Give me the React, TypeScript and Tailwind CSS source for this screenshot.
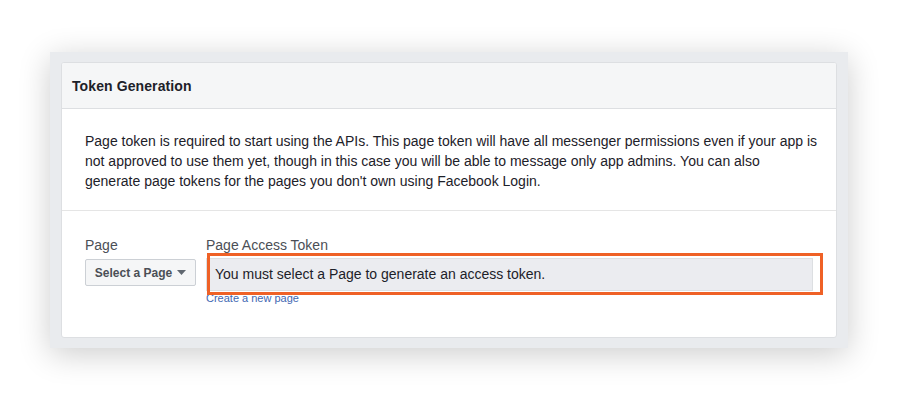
export default function App() {
    return (
        <div className="w-[900px] h-[400px] bg-white pt-[52px] pl-[50px] font-['Liberation_Sans',Arial,sans-serif]">
            <div className="w-[798px] h-[296px] bg-[#e9ebee] pt-[10px] px-[11px] shadow-[0_6px_30px_rgba(0,0,0,0.2)]">
                <div className="h-[276px] bg-white border border-[#dddfe2] rounded-[3px] overflow-hidden">
                    {/* header */}
                    <div className="h-[46px] bg-[#f5f6f7] border-b border-[#dddfe2] flex items-center pl-[10px] pt-[1px]">
                        <h3 className="text-[14px] font-bold text-[#1d2129] tracking-[0.1px]">Token Generation</h3>
                    </div>

                    {/* description */}
                    <div className="pt-[22px] pb-[19px] pl-[23px] pr-[8px] border-b border-[#e5e5e5]">
                        <p className="text-[14px] leading-[20px] text-[#1d2129] whitespace-nowrap">
                            Page token is required to start using the APIs. This page token will have all messenger permissions even if your app is
                            <br />
                            not approved to use them yet, though in this case you will be able to message only app admins. You can also
                            <br />
                            generate page tokens for the pages you don't own using Facebook Login.
                        </p>
                    </div>

                    {/* form */}
                    <div className="flex pt-[25px] pl-[23px] pr-[23px]">
                        <div className="w-[121px] shrink-0">
                            <label className="block text-[14px] leading-[18px] text-[#4b4f56]">Page</label>
                            <button className="mt-[5px] h-[27px] w-[111px] flex items-center justify-center gap-[5px] bg-[#f5f6f7] border border-[#ccd0d5] rounded-[2px] text-[12px] font-bold text-[#4b4f56]">
                                Select a Page
                                <svg width="9" height="5" viewBox="0 0 9 5">
                                    <path d="M0 0h9L4.5 5z" fill="#606770" />
                                </svg>
                            </button>
                        </div>
                        <div className="flex-1 relative">
                            <label className="block text-[14px] leading-[18px] text-[#4b4f56]">Page Access Token</label>
                            <div className="mt-[4px] h-[33px] w-[607px] bg-[#ebecf0] border border-[#dddfe2] flex items-center pl-[8px] text-[14px] text-[#1d2129]">
                                You must select a Page to generate an access token.
                            </div>
                            <a href="#" className="block text-[11px] leading-[13px] text-[#4267b2] mt-[1px]">Create a new page</a>
                            {/* highlight annotation */}
                            <div className="absolute left-[1px] top-[17px] w-[616px] h-[42px] border-[3px] border-[#ef6126] pointer-events-none" />
                        </div>
                    </div>
                </div>
            </div>
        </div>
    );
}
